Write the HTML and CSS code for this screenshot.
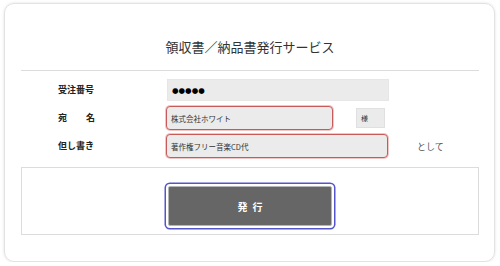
FILE: index.html
```html
<!DOCTYPE html>
<html lang="ja">
<head>
<meta charset="utf-8">
<link rel="stylesheet" href="styles.css">
</head>
<body>
<div class="card">
  <h1 class="title">領収書／納品書発行サービス</h1>
  <div class="rule"></div>
  <div class="form">
    <div class="row">
      <div class="label">受注番号</div>
      <div class="field field-plain wide"><span class="dots">●●●●●</span></div>
    </div>
    <div class="row">
      <div class="label label-spread"><span>宛</span><span>名</span></div>
      <div class="field field-err mid">株式会社ホワイト</div>
      <div class="sama">様</div>
    </div>
    <div class="row">
      <div class="label">但し書き</div>
      <div class="field field-err wide">著作権フリー音楽CD代</div>
      <div class="suffix">として</div>
    </div>
  </div>
  <div class="actions">
    <button class="btn">発行</button>
  </div>
</div>
</body>
</html>
```

FILE: styles.css
```css
html, body {
  margin: 0;
  padding: 0;
  background: #fff;
}
body {
  font-family: "Noto Sans CJK JP", "Noto Sans", sans-serif;
  color: #222;
}
.card {
  box-sizing: border-box;
  margin: 3px 0 0 4px;
  width: 491px;
  height: 259px;
  border: 1px solid #e2e2e2;
  border-radius: 10px;
  box-shadow: 0 0 3px rgba(0,0,0,0.12);
  padding: 35px 15px 0 16px;
}
.title {
  margin: 0;
  font-size: 13px;
  line-height: 16px;
  font-weight: 400;
  color: #333;
  text-align: center;
  letter-spacing: 0;
}
.rule {
  margin-top: 15px;
  height: 1px;
  background: #dcdcdc;
}
.form {
  display: flex;
  flex-direction: column;
  gap: 4px;
  margin-top: 7px;
}
.row {
  display: flex;
  align-items: center;
  height: 24px;
}
.label {
  box-sizing: border-box;
  width: 145px;
  padding-left: 37px;
  font-size: 9px;
  font-weight: 700;
  color: #222;
  line-height: 12px;
}
.label-spread {
  display: flex;
}
.label-spread span:first-child {
  width: 28px;
}
.field {
  box-sizing: border-box;
  display: flex;
  align-items: center;
  background: #ebebeb;
  font-size: 7.5px;
  color: #333;
  padding-left: 4px;
}
.field-plain {
  height: 22px;
  border: 1px solid #e6e6e6;
  margin-left: 1px;
  width: 221px;
}
.wide {
  width: 222px;
}
.mid {
  width: 167px;
}
.field-err {
  height: 24px;
  border: 1px solid #c95a5a;
  border-radius: 4px;
  box-shadow: 0 0 0 1px #f3c6c6;
}
.dots {
  font-size: 7.5px;
  color: #000;
  letter-spacing: 0;
  font-family: "DejaVu Sans", sans-serif;
}
.sama {
  box-sizing: border-box;
  margin-left: 23px;
  width: 29px;
  height: 20px;
  background: #ebebeb;
  border: 1px solid #e0e0e0;
  font-size: 7px;
  color: #333;
  display: flex;
  align-items: center;
  padding-left: 4px;
}
.suffix {
  margin-left: 29px;
  font-size: 9px;
  color: #555;
}
.actions {
  box-sizing: border-box;
  margin-top: 9px;
  height: 68px;
  border: 1px solid #dcdcdc;
  display: flex;
  justify-content: center;
  align-items: flex-start;
  padding-top: 18px;
}
.btn {
  box-sizing: border-box;
  width: 164px;
  height: 40px;
  background: #666;
  border: 1px solid #b5b5b5;
  border-radius: 2px;
  box-shadow: 0 0 0 2px #fff, 0 0 0 3.5px #5555c8;
  color: #fff;
  font-family: "Noto Sans CJK JP", sans-serif;
  font-size: 10px;
  font-weight: 700;
  letter-spacing: 5px;
  padding: 0 0 0 5px;
  cursor: pointer;
}
```
